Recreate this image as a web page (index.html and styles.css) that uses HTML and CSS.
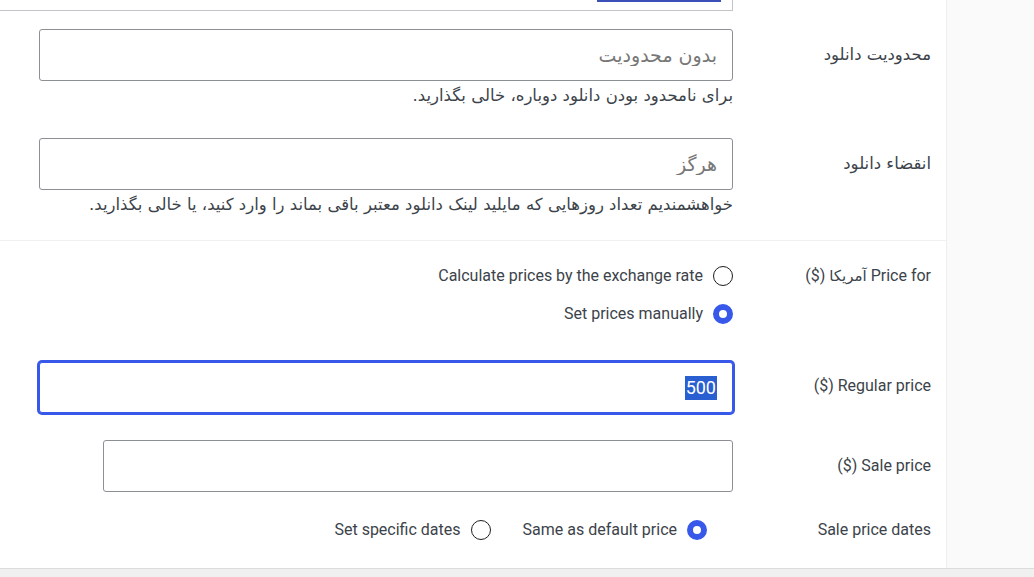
FILE: index.html
```html
<!DOCTYPE html>
<html lang="fa" dir="rtl">
<head>
  <meta charset="UTF-8" />
  <meta name="viewport" content="width=device-width, initial-scale=1.0"/>
  <title>اطلاعات محصول</title>
  <link rel="stylesheet" href="styles.css">
</head>
<body>
  <div class="product-data">
    <div class="tabs"></div>

    <div class="panel">
      <!-- tail of the field above (file list) -->
      <div class="prev-field"><span class="prev-button"></span></div>

      <div class="options-group">
        <div class="form-row first">
          <label class="row-label fa">محدودیت دانلود</label>
          <div class="row-field">
            <input class="text-input" type="text" placeholder="بدون محدودیت">
            <p class="description">برای نامحدود بودن دانلود دوباره، خالی بگذارید.</p>
          </div>
        </div>

        <div class="form-row second">
          <label class="row-label fa">انقضاء دانلود</label>
          <div class="row-field">
            <input class="text-input" type="text" placeholder="هرگز">
            <p class="description">خواهشمندیم تعداد روزهایی که مایلید لینک دانلود معتبر باقی بماند را وارد کنید، یا خالی بگذارید.</p>
          </div>
        </div>
      </div>

      <div class="options-group pricing">
        <div class="form-row">
          <label class="row-label">Price for <span class="fa">آمریکا</span> ($)</label>
          <div class="row-field radio-list">
            <label class="radio-option">
              <span class="radio"></span>
              <span>Calculate prices by the exchange rate</span>
            </label>
            <label class="radio-option">
              <span class="radio checked"></span>
              <span>Set prices manually</span>
            </label>
          </div>
        </div>

        <div class="form-row regular">
          <label class="row-label">Regular price ($)</label>
          <div class="row-field">
            <div class="text-input focused"><span class="selected">500</span></div>
          </div>
        </div>

        <div class="form-row sale">
          <label class="row-label">Sale price ($)</label>
          <div class="row-field">
            <input class="text-input short" type="text">
          </div>
        </div>

        <div class="form-row dates">
          <label class="row-label">Sale price dates</label>
          <div class="row-field radio-inline">
            <label class="radio-option">
              <span class="radio checked"></span>
              <span>Same as default price</span>
            </label>
            <label class="radio-option">
              <span class="radio"></span>
              <span>Set specific dates</span>
            </label>
          </div>
        </div>
      </div>
    </div>
  </div>
</body>
</html>
```

FILE: styles.css
```css
body {
  margin: 0;
  padding: 0;
  background-color: #f0f0f1;
  font-family: Roboto, "DejaVu Sans", sans-serif;
  font-size: 16px;
  color: #3c434a;
}

.product-data {
  display: flex;
  height: 568px;
  border-bottom: 1px solid #dcdcde;
  background-color: #fff;
}

/* tabs column on the right */
.tabs {
  width: 87px;
  background-color: #fafafa;
  border-left: 1px solid #eee;
}

.panel {
  width: 946px;
  background-color: #fff;
}

.prev-field {
  height: 10px;
  width: 733px;
  margin-left: auto;
  margin-right: 213px;
  border-right: 1px solid #c3c4c7;
  border-bottom: 1px solid #c3c4c7;
  box-sizing: content-box;
  position: relative;
}

.prev-button {
  position: absolute;
  top: 0;
  right: 11px;
  width: 124px;
  height: 2px;
  background-color: #3a4fb8;
}

.fa {
  font-family: "DejaVu Sans", sans-serif;
  font-size: 16.5px;
}

.options-group {
  padding-bottom: 25px;
  border-bottom: 1px solid #f0f0f0;
}

.options-group.pricing {
  border-bottom: none;
  padding-top: 25px;
}

.form-row {
  display: flex;
  align-items: flex-start;
  padding-right: 15px;
}

.form-row.first {
  margin-top: 18px;
}

.form-row.second {
  margin-top: 32px;
}

.form-row.regular {
  margin-top: 36px;
}

.form-row.sale {
  margin-top: 25px;
}

.form-row.dates {
  margin-top: 28px;
}

.row-label {
  width: 198px;
  flex-shrink: 0;
  text-align: right;
  line-height: 52px;
  color: #3c434a;
}

.row-label .fa {
  font-size: 15px;
}

.pricing .form-row:first-child .row-label,
.dates .row-label {
  line-height: 20px;
}

.row-field {
  width: 733px;
}

.text-input {
  display: block;
  box-sizing: border-box;
  width: 694px;
  height: 52px;
  margin: 0;
  padding: 0 15px;
  border: 1px solid #8c8f94;
  border-radius: 3px;
  background-color: #fff;
  font-family: "DejaVu Sans", Roboto, sans-serif;
  font-size: 19px;
  color: #2c3338;
  text-align: right;
  outline: none;
}

.text-input::placeholder {
  color: #777;
}

.text-input.short {
  width: 630px;
}

.text-input.focused {
  width: 694px;
  height: 51px;
  margin: 2px 0;
  border-color: #3858e9;
  box-shadow: 0 0 0 2px #3858e9;
  display: flex;
  align-items: center;
  font-family: Roboto, sans-serif;
  font-size: 18px;
}

.selected {
  background-color: #2a5fd1;
  color: #fff;
  line-height: 24px;
  padding: 0 1px;
}

.description {
  margin: 5px 0 0 0;
  line-height: 20px;
  font-family: "DejaVu Sans", sans-serif;
  font-size: 16.5px;
  color: #3c434a;
}

.radio-list {
  display: flex;
  flex-direction: column;
  gap: 18px;
}

.radio-inline {
  display: flex;
  gap: 32px;
  padding-right: 26px;
  box-sizing: border-box;
}

.radio-option {
  display: flex;
  align-items: center;
  gap: 10px;
  line-height: 20px;
  color: #3c434a;
}

.radio {
  box-sizing: border-box;
  width: 20px;
  height: 20px;
  border: 1px solid #1e1e1e;
  border-radius: 50%;
  background-color: #fff;
}

.radio.checked {
  border: 6px solid #3858e9;
}
```
